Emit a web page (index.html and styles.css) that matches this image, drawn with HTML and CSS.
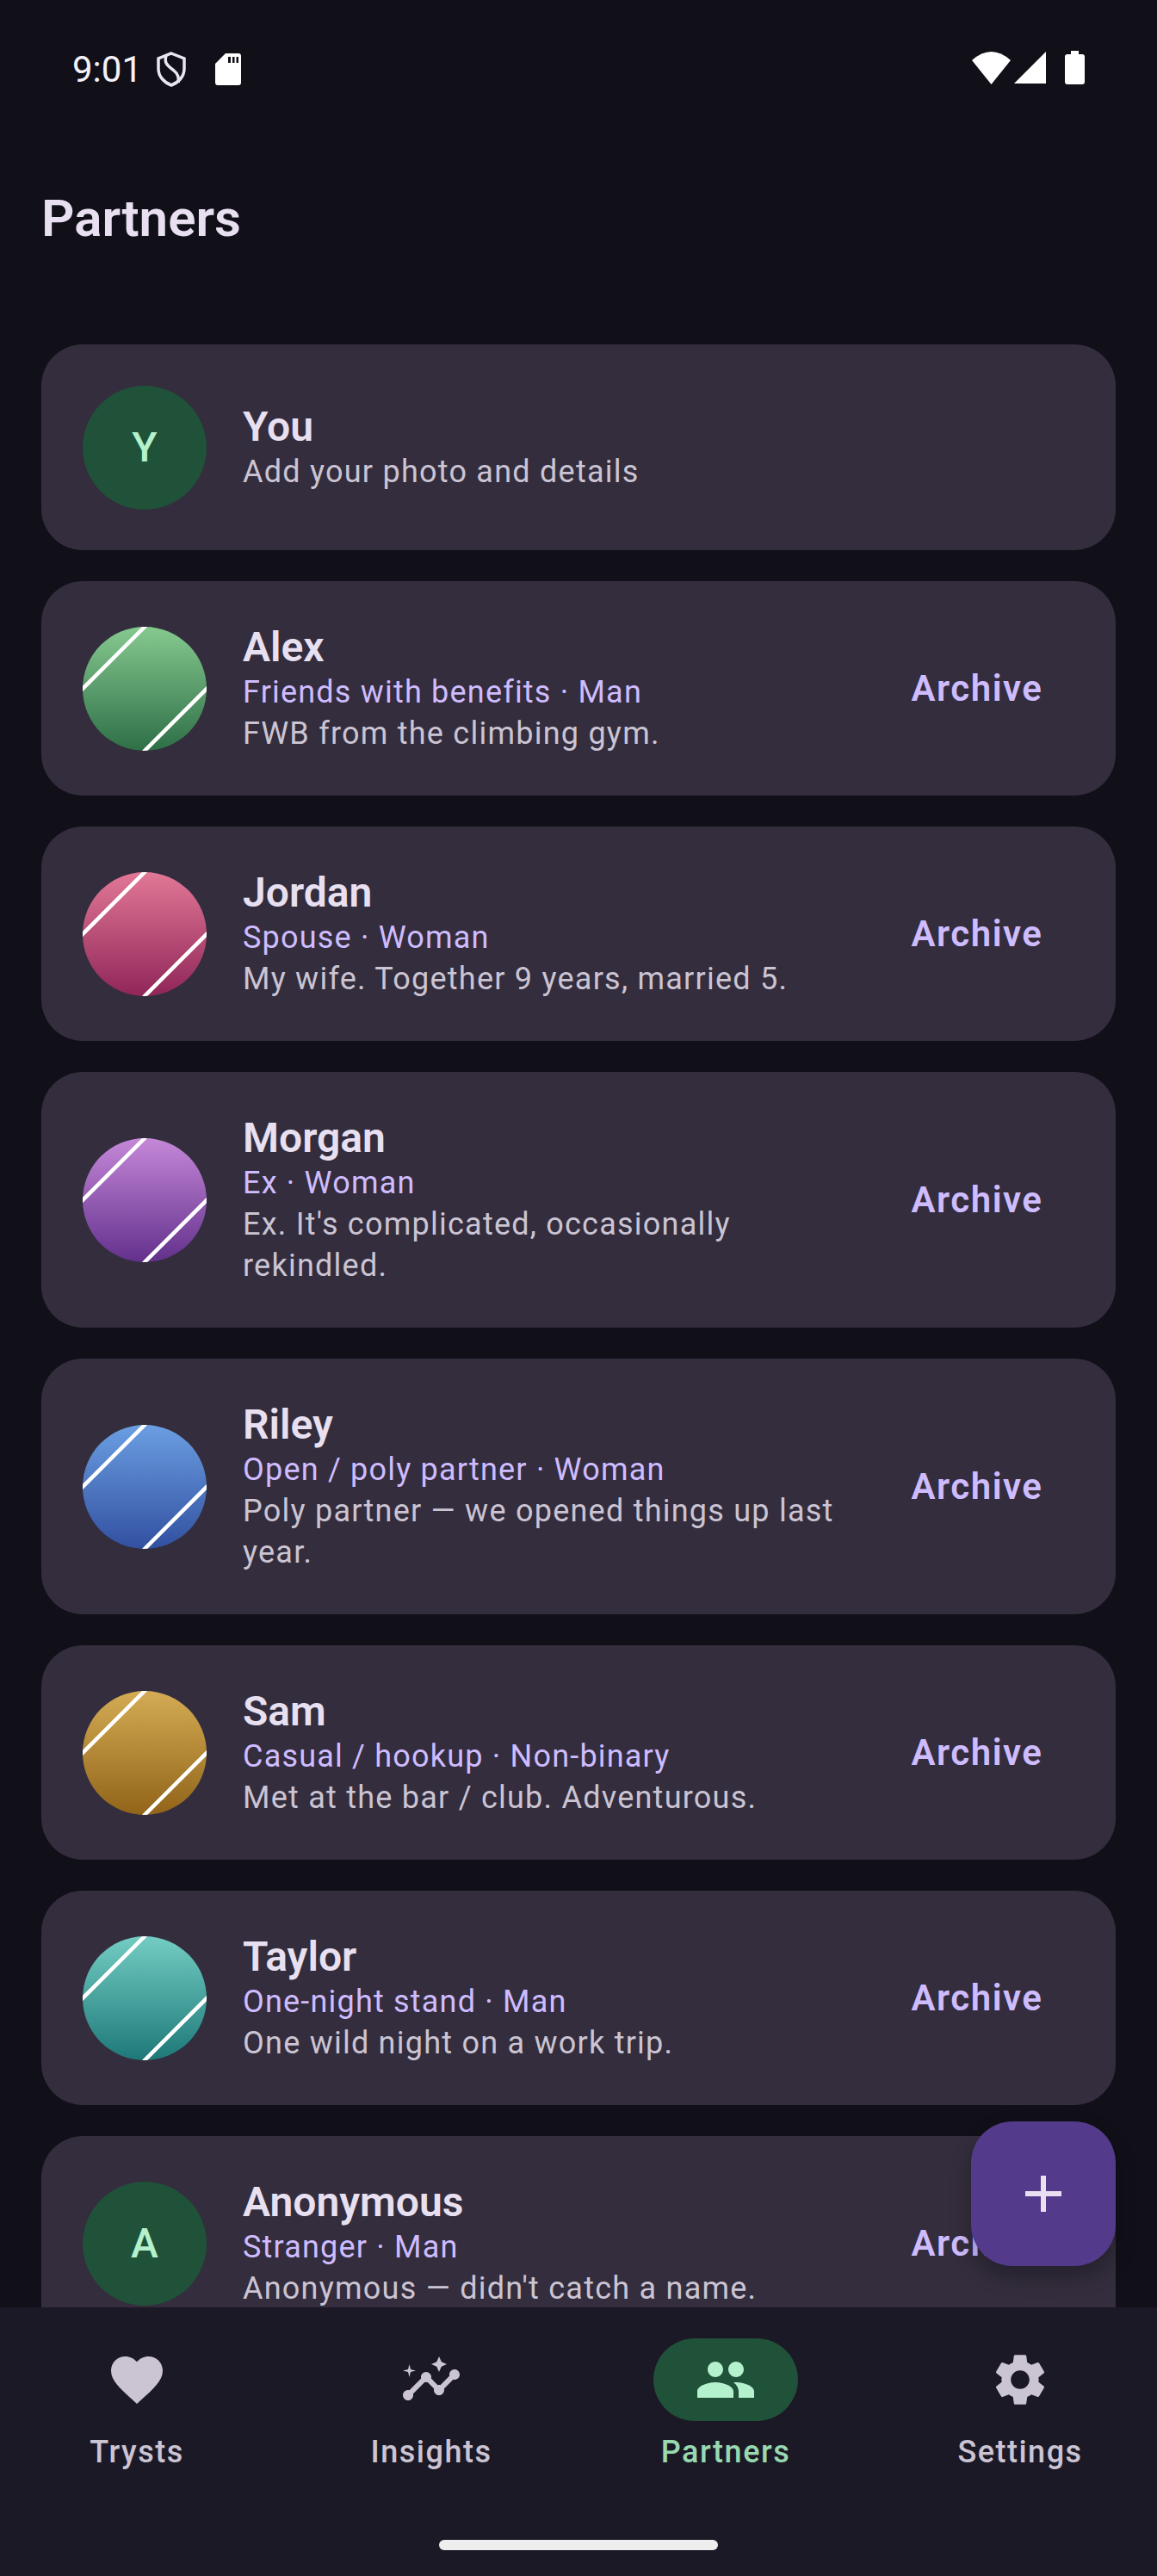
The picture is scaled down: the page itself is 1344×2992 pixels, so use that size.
FILE: index.html
```html
<!DOCTYPE html>
<html lang="en">
<head>
    <meta charset="UTF-8">
    <meta name="viewport" content="width=device-width, initial-scale=1.0">
    <title>Partners</title>
    <link rel="stylesheet" href="styles.css">
</head>
<body>
    <div class="screen">
        <!-- Status bar -->
        <div class="status-bar">
            <div class="status-left">
                <span class="time">9:01</span>
                <svg class="icon-shield" width="34" height="41" viewBox="0 0 34 41">
                    <path d="M17 2 L32 8 V20 C32 29 25 36 17 39 C9 36 2 29 2 20 V8 Z" fill="none" stroke="#e8e6ee" stroke-width="3.5"/>
                    <path d="M11 5 C8 14 14 17 20 22 C25 26 26 31 25 36" fill="none" stroke="#e8e6ee" stroke-width="3.5"/>
                </svg>
                <svg class="icon-sd" width="30" height="37" viewBox="0 0 30 37">
                    <path fill-rule="evenodd" d="M12 0 H27 Q30 0 30 3 V34 Q30 37 27 37 H3 Q0 37 0 34 V12 Z M15 4 V11 H18 V4 Z M20 4 V11 H22.500 V4 Z M24.500 4 V11 H27 V4 Z" fill="#fff"/>
                </svg>
            </div>
            <div class="status-right">
                <svg width="45" height="38" viewBox="0 0 45 38">
                    <path d="M22.500 38 L0 10 Q22.500 -10 45 10 Z" fill="#fff"/>
                </svg>
                <svg width="37" height="37" viewBox="0 0 37 37">
                    <path d="M0 37 L37 0 V37 Z" fill="#fff"/>
                </svg>
                <svg class="icon-battery" width="23" height="39" viewBox="0 0 23 39">
                    <path d="M7 0 H16 V4 H20 Q23 4 23 7 V36 Q23 39 20 39 H3 Q0 39 0 36 V7 Q0 4 3 4 H7 Z" fill="#fff"/>
                </svg>
            </div>
        </div>

        <h1 class="page-title">Partners</h1>

        <div class="partner-list">
            <div class="card card-you">
                <div class="avatar avatar-letter">Y</div>
                <div class="card-text">
                    <div class="name">You</div>
                    <div class="note">Add your photo and details</div>
                </div>
            </div>

            <div class="card">
                <div class="avatar photo-green">
                    <svg width="144" height="144" viewBox="0 0 144 144"><path d="M-2 74 L74 -2 M146 70 L70 146" stroke="#fff" stroke-width="4.500"/></svg>
                </div>
                <div class="card-text">
                    <div class="name">Alex</div>
                    <div class="relation">Friends with benefits · Man</div>
                    <div class="note">FWB from the climbing gym.</div>
                </div>
                <button class="archive">Archive</button>
            </div>

            <div class="card">
                <div class="avatar photo-pink">
                    <svg width="144" height="144" viewBox="0 0 144 144"><path d="M-2 74 L74 -2 M146 70 L70 146" stroke="#fff" stroke-width="4.500"/></svg>
                </div>
                <div class="card-text">
                    <div class="name">Jordan</div>
                    <div class="relation">Spouse · Woman</div>
                    <div class="note">My wife. Together 9 years, married 5.</div>
                </div>
                <button class="archive">Archive</button>
            </div>

            <div class="card">
                <div class="avatar photo-purple">
                    <svg width="144" height="144" viewBox="0 0 144 144"><path d="M-2 74 L74 -2 M146 70 L70 146" stroke="#fff" stroke-width="4.500"/></svg>
                </div>
                <div class="card-text">
                    <div class="name">Morgan</div>
                    <div class="relation">Ex · Woman</div>
                    <div class="note">Ex. It's complicated, occasionally rekindled.</div>
                </div>
                <button class="archive">Archive</button>
            </div>

            <div class="card">
                <div class="avatar photo-blue">
                    <svg width="144" height="144" viewBox="0 0 144 144"><path d="M-2 74 L74 -2 M146 70 L70 146" stroke="#fff" stroke-width="4.500"/></svg>
                </div>
                <div class="card-text">
                    <div class="name">Riley</div>
                    <div class="relation">Open / poly partner · Woman</div>
                    <div class="note">Poly partner — we opened things up last year.</div>
                </div>
                <button class="archive">Archive</button>
            </div>

            <div class="card">
                <div class="avatar photo-gold">
                    <svg width="144" height="144" viewBox="0 0 144 144"><path d="M-2 74 L74 -2 M146 70 L70 146" stroke="#fff" stroke-width="4.500"/></svg>
                </div>
                <div class="card-text">
                    <div class="name">Sam</div>
                    <div class="relation">Casual / hookup · Non-binary</div>
                    <div class="note">Met at the bar / club. Adventurous.</div>
                </div>
                <button class="archive">Archive</button>
            </div>

            <div class="card">
                <div class="avatar photo-teal">
                    <svg width="144" height="144" viewBox="0 0 144 144"><path d="M-2 74 L74 -2 M146 70 L70 146" stroke="#fff" stroke-width="4.500"/></svg>
                </div>
                <div class="card-text">
                    <div class="name">Taylor</div>
                    <div class="relation">One-night stand · Man</div>
                    <div class="note">One wild night on a work trip.</div>
                </div>
                <button class="archive">Archive</button>
            </div>

            <div class="card">
                <div class="avatar avatar-letter">A</div>
                <div class="card-text">
                    <div class="name">Anonymous</div>
                    <div class="relation">Stranger · Man</div>
                    <div class="note">Anonymous — didn't catch a name.</div>
                </div>
                <button class="archive">Archive</button>
            </div>
        </div>

        <!-- Add partner -->
        <button class="fab">
            <svg width="42" height="42" viewBox="0 0 42 42"><path d="M18 0 H24 V18 H42 V24 H24 V42 H18 V24 H0 V18 H18 Z" fill="#e8e0f0"/></svg>
        </button>

        <!-- Bottom navigation -->
        <nav class="bottom-nav">
            <div class="nav-item">
                <div class="nav-icon">
                    <svg width="72" height="72" viewBox="0 0 24 24"><path d="M12 21.35l-1.45-1.32C5.4 15.36 2 12.28 2 8.5 2 5.42 4.42 3 7.5 3c1.74 0 3.41.81 4.5 2.09C13.09 3.81 14.76 3 16.5 3 19.58 3 22 5.42 22 8.5c0 3.78-3.4 6.86-8.55 11.54L12 21.35z"/></svg>
                </div>
                <span class="nav-label">Trysts</span>
            </div>
            <div class="nav-item">
                <div class="nav-icon">
                    <svg width="72" height="72" viewBox="0 0 24 24"><path d="M21 8c-1.45 0-2.26 1.44-1.93 2.51l-3.55 3.56c-.3-.09-.74-.09-1.04 0l-2.55-2.55C12.27 10.45 11.46 9 10 9c-1.45 0-2.27 1.44-1.93 2.52l-4.56 4.55C2.44 15.74 1 16.55 1 18c0 1.1.9 2 2 2 1.45 0 2.26-1.44 1.93-2.51l4.55-4.56c.3.09.74.09 1.04 0l2.55 2.55C12.73 16.55 13.54 18 15 18c1.45 0 2.27-1.44 1.93-2.52l3.56-3.55c1.07.33 2.51-.48 2.51-1.93 0-1.1-.9-2-2-2z"/><path d="M15 9l.94-2.07L18 6l-2.06-.93L15 3l-.92 2.07L12 6l2.08.93z"/><path d="M3.500 11L4 9l2-.5L4 8l-.5-2L3 8l-2 .5L3 9z"/></svg>
                </div>
                <span class="nav-label">Insights</span>
            </div>
            <div class="nav-item active">
                <div class="nav-icon">
                    <svg width="72" height="72" viewBox="0 0 24 24"><path d="M16 11c1.66 0 2.99-1.34 2.99-3S17.66 5 16 5c-1.66 0-3 1.34-3 3s1.34 3 3 3zm-8 0c1.66 0 2.99-1.34 2.99-3S9.660 5 8 5C6.340 5 5 6.340 5 8s1.340 3 3 3zm0 2c-2.330 0-7 1.170-7 3.500V19h14v-2.500c0-2.330-4.670-3.500-7-3.500zm8 0c-.29 0-.62.02-.97.05 1.160.84 1.970 1.970 1.970 3.450V19h6v-2.500c0-2.330-4.670-3.500-7-3.500z"/></svg>
                </div>
                <span class="nav-label">Partners</span>
            </div>
            <div class="nav-item">
                <div class="nav-icon">
                    <svg width="72" height="72" viewBox="0 0 24 24"><path d="M19.14 12.94c.04-.3.06-.61.06-.94 0-.32-.02-.64-.07-.94l2.03-1.58c.18-.14.23-.41.12-.61l-1.92-3.32c-.12-.22-.37-.29-.59-.22l-2.39.96c-.5-.38-1.03-.7-1.62-.94l-.36-2.54c-.04-.24-.24-.41-.48-.41h-3.84c-.24 0-.43.17-.47.41l-.36 2.54c-.59.24-1.13.57-1.62.94l-2.39-.96c-.22-.08-.47 0-.59.22L2.74 8.87c-.12.21-.08.47.12.61l2.03 1.58c-.05.3-.09.63-.09.94s.02.64.07.94l-2.03 1.58c-.18.14-.23.41-.12.61l1.92 3.32c.12.22.37.29.59.22l2.39-.96c.5.38 1.03.7 1.62.94l.36 2.54c.05.24.24.41.48.41h3.84c.24 0 .44-.17.47-.41l.36-2.54c.59-.24 1.13-.56 1.62-.94l2.39.96c.22.08.47 0 .59-.22l1.92-3.32c.12-.22.07-.47-.12-.61l-2.01-1.58zM12 15.6c-1.98 0-3.6-1.62-3.6-3.6s1.62-3.6 3.6-3.6 3.6 1.62 3.6 3.6-1.62 3.6-3.6 3.6z"/></svg>
                </div>
                <span class="nav-label">Settings</span>
            </div>
            <div class="home-indicator"></div>
        </nav>
    </div>
</body>
</html>
```

FILE: styles.css
```css
* {
    margin: 0;
    padding: 0;
    box-sizing: border-box;
    font-family: Roboto, sans-serif;
}

html, body {
    width: 1344px;
    height: 2992px;
    overflow: hidden;
    background: #110f18;
}

.screen {
    position: relative;
    display: flex;
    flex-direction: column;
    width: 1344px;
    height: 2992px;
}

/* Status bar */

.status-bar {
    display: flex;
    justify-content: space-between;
    align-items: center;
    height: 124px;
    padding: 36px 84px 0;
    flex-shrink: 0;
}

.status-left,
.status-right {
    display: flex;
    align-items: center;
}

.status-right {
    padding-bottom: 3px;
}

.time {
    font-size: 42px;
    color: #f4f2f8;
    margin-right: 17px;
}

.icon-shield {
    margin-right: 34px;
}

.status-right svg {
    margin-left: 4px;
}

.status-right .icon-battery {
    margin-left: 22px;
}

.page-title {
    font-size: 60px;
    font-weight: 600;
    line-height: 84px;
    color: #e8e0f0;
    margin: 88px 48px 104px;
    flex-shrink: 0;
}

/* Partner cards */

.partner-list {
    flex: 1;
    min-height: 0;
    overflow: hidden;
    display: flex;
    flex-direction: column;
    gap: 36px;
    padding: 0 48px;
}

.card {
    display: flex;
    align-items: center;
    flex-shrink: 0;
    padding: 48px;
    background: #332d3d;
    border-radius: 48px;
}

.card-you {
    padding-top: 47.5px;
    padding-bottom: 47.5px;
}

.avatar {
    position: relative;
    width: 144px;
    height: 144px;
    border-radius: 50%;
    overflow: hidden;
    flex-shrink: 0;
    margin-right: 42px;
}

.avatar svg {
    display: block;
}

.avatar-letter {
    display: flex;
    align-items: center;
    justify-content: center;
    background: #205139;
    color: #b4f1cd;
    font-size: 48px;
    font-weight: 500;
}

.photo-green { background: linear-gradient(#86c98f, #2e6f47); }
.photo-pink { background: linear-gradient(#e27896, #8f2658); }
.photo-purple { background: linear-gradient(#c588d8, #62308c); }
.photo-blue { background: linear-gradient(#6b9ee2, #3250a0); }
.photo-gold { background: linear-gradient(#d4ac54, #916419); }
.photo-teal { background: linear-gradient(#73cdc3, #1e7878); }

.card-text {
    flex: 1;
    min-width: 0;
}

.name {
    font-size: 48px;
    font-weight: 600;
    line-height: 57px;
    color: #e8e0f0;
}

.relation,
.note {
    font-size: 36px;
    line-height: 48px;
    letter-spacing: 1.2px;
}

.relation {
    color: #cfbcff;
}

.note {
    color: #cbc4d3;
    letter-spacing: 1.24px;
}

.archive {
    flex-shrink: 0;
    width: 226px;
    background: none;
    border: none;
    text-align: center;
    font-size: 42px;
    font-weight: 600;
    letter-spacing: 1.5px;
    color: #cfbcff;
}

/* Floating button */

.fab {
    position: absolute;
    left: 1128px;
    top: 2464px;
    width: 168px;
    height: 168px;
    display: flex;
    align-items: center;
    justify-content: center;
    background: #533a8b;
    border: none;
    border-radius: 48px;
    box-shadow: 0 12px 24px rgba(0,0,0,0.28);
}

/* Bottom navigation */

.bottom-nav {
    position: relative;
    display: flex;
    justify-content: space-between;
    align-items: flex-start;
    height: 312px;
    padding: 36px 75px 0;
    flex-shrink: 0;
    background: #1c1926;
}

.nav-item {
    display: flex;
    flex-direction: column;
    align-items: center;
    width: 168px;
}

.nav-icon {
    display: flex;
    align-items: center;
    justify-content: center;
    width: 168px;
    height: 96px;
    border-radius: 48px;
    fill: #cbc4d3;
}

.nav-label {
    margin-top: 12px;
    font-size: 36px;
    font-weight: 500;
    line-height: 48px;
    letter-spacing: 1.5px;
    color: #cbc4d3;
}

.nav-item.active .nav-icon {
    background: #205139;
    fill: #b4f1cd;
}

.nav-item.active .nav-label {
    color: #97d9b0;
}

.home-indicator {
    position: absolute;
    left: 510px;
    bottom: 30px;
    width: 324px;
    height: 12px;
    border-radius: 6px;
    background: #eeeeee;
}
```
